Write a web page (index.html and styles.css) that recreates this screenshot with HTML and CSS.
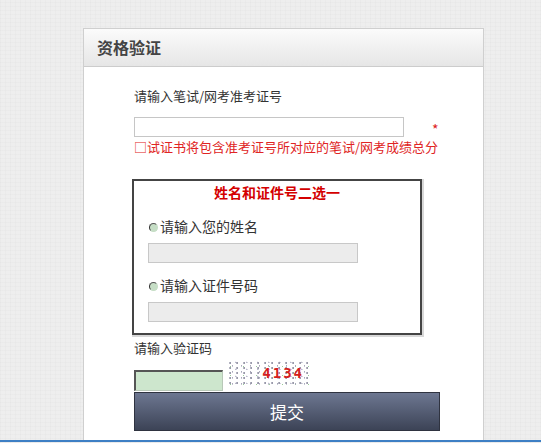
FILE: index.html
```html
<!DOCTYPE html>
<html lang="zh-CN">
<head>
    <meta charset="UTF-8">
    <title>资格验证</title>
    <link rel="stylesheet" href="styles.css">
</head>
<body>
<div class="card">
    <div class="card-head">资格验证</div>
    <div class="card-body">
        <div class="label">请输入笔试/网考准考证号</div>
        <div class="row">
            <input type="text" class="txt">
            <span class="star">*</span>
        </div>
        <div class="note">□试证书将包含准考证号所对应的笔试/网考成绩总分</div>

        <div class="choose">
            <div class="choose-title">姓名和证件号二选一</div>
            <div class="opt"><span class="radio"></span>请输入您的姓名</div>
            <input type="text" class="gray">
            <div class="opt opt-2"><span class="radio"></span>请输入证件号码</div>
            <input type="text" class="gray">
        </div>

        <div class="label label-code">请输入验证码</div>
        <div class="code-row">
            <input type="text" class="code">
            <div class="captcha">4134</div>
        </div>
        <button class="submit">提交</button>
    </div>
</div>
<footer></footer>
</body>
</html>
```

FILE: styles.css
```css
body {
    margin: 0;
    padding: 0;
    font-family: "Noto Sans CJK SC", "Liberation Sans", sans-serif;
    color: #333;
    background-color: #eeeeee;
    background-image:
        repeating-linear-gradient(0deg, rgba(0, 0, 0, 0.015) 0 1px, transparent 1px 4px),
        repeating-linear-gradient(90deg, rgba(0, 0, 0, 0.015) 0 1px, transparent 1px 5px);
    height: 443px;
    overflow: hidden;
}

.card {
    margin: 28px 0 0 83px;
    width: 399px;
    border: 1px solid #cfcfcf;
    border-bottom: none;
    background: #fff;
}

.card-head {
    height: 37px;
    line-height: 37px;
    padding-left: 13px;
    font-size: 16px;
    font-weight: bold;
    color: #444;
    background: linear-gradient(#fbfbfb, #e6e6e6);
    border-bottom: 1px solid #cccccc;
}

.card-body {
    padding: 20px 0 9px 50px;
}

.label {
    font-size: 13px;
    line-height: 18px;
    height: 18px;
}

.row {
    display: flex;
    align-items: flex-start;
    margin-top: 12px;
    height: 20px;
}

.txt {
    box-sizing: border-box;
    width: 270px;
    height: 20px;
    margin: 0;
    border: 1px solid #c6c6c6;
    background: #fff;
}

.star {
    color: #d22;
    font-size: 14px;
    line-height: 10px;
    height: 10px;
    margin: 7px 0 0 28px;
}

.note {
    margin-top: 1px;
    font-size: 13px;
    line-height: 18px;
    color: #e02424;
    white-space: nowrap;
}

.choose {
    box-sizing: border-box;
    width: 290px;
    height: 156px;
    margin: 23px 0 0 -2px;
    padding: 2px 0 0 14px;
    border: 2px solid #444;
    box-shadow: 1px 1px 0 1px #d8d8d8;
}

.choose-title {
    text-align: center;
    margin-left: -14px;
    font-size: 14px;
    font-weight: bold;
    line-height: 18px;
    color: #d40000;
}

.opt {
    display: flex;
    align-items: center;
    margin-top: 16px;
    font-size: 14px;
    line-height: 18px;
}

.opt-2 {
    margin-top: 13px;
}

.radio {
    box-sizing: border-box;
    width: 9px;
    height: 9px;
    margin: 3px 2px 0 1px;
    border-radius: 50%;
    background: #c6dec6;
    border: 1px solid #c6dec6;
    border-left-color: #333;
    border-top-color: #555;
}

.gray {
    display: block;
    box-sizing: border-box;
    width: 210px;
    height: 20px;
    margin: 8px 0 0 0;
    border: 1px solid #c8c8c8;
    background: #ececec;
}

.label-code {
    margin-top: 4px;
}

.code-row {
    display: flex;
    align-items: flex-start;
    margin-top: 4px;
    height: 31px;
}

.code {
    box-sizing: border-box;
    width: 89px;
    height: 21px;
    margin: 9px 0 0 0;
    border: 2px solid #555;
    border-right: 1px solid #b8c8b8;
    border-bottom: 1px solid #b8c8b8;
    background: #cde6cd;
}

.captcha {
    width: 82px;
    height: 24px;
    margin-left: 5px;
    text-align: right;
    padding-right: 6px;
    box-sizing: border-box;
    font-family: "DejaVu Sans Mono", monospace;
    font-size: 14px;
    font-weight: bold;
    line-height: 24px;
    letter-spacing: 2px;
    color: #d42020;
    background-color: #fff;
    background-image:
        radial-gradient(circle at 30% 40%, #99a 0 0.7px, transparent 1px),
        radial-gradient(circle at 70% 20%, #bbc 0 0.7px, transparent 1px),
        radial-gradient(circle at 50% 80%, #aab 0 0.6px, transparent 0.9px),
        radial-gradient(circle at 20% 60%, #9c9 0 0.6px, transparent 0.9px);
    background-size: 7px 5px, 11px 7px, 9px 6px, 13px 9px;
}

.submit {
    display: block;
    width: 306px;
    height: 39px;
    margin: 0;
    padding: 0;
    border: 1px solid #2f3340;
    background: linear-gradient(#6d7791, #3c4356);
    color: #fff;
    font-family: "Noto Sans CJK SC", sans-serif;
    font-size: 17px;
    cursor: pointer;
}

footer {
    height: 2px;
    background: #3d7fc4;
}
```
